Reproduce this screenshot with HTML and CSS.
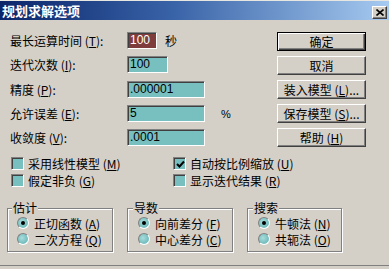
FILE: index.html
```
<!DOCTYPE html>
<html lang="zh-CN">
<head>
<meta charset="utf-8">
<title>规划求解选项</title>
<link rel="stylesheet" href="styles.css">
</head>
<body>
<div class="dialog">
  <div class="titlebar">
    <span class="title">规划求解选项</span>
    <span class="close"><svg width="8" height="7" viewBox="0 0 8 7"><path d="M0.5 0.5 L7.5 6.5 M7.5 0.5 L0.5 6.5" stroke="#000" stroke-width="1.6" fill="none"/></svg></span>
  </div>
  <div class="main">
    <div class="fields">
      <div class="row"><span class="lbl">最长运算时间 (<u>T</u>):</span><span class="edit w30 selected">100</span><span class="unit">秒</span></div>
      <div class="row"><span class="lbl">迭代次数 (<u>I</u>):</span><span class="edit w41">100</span></div>
      <div class="row"><span class="lbl">精度 (<u>P</u>):</span><span class="edit w78">.000001</span></div>
      <div class="row"><span class="lbl">允许误差 (<u>E</u>):</span><span class="edit w78">5</span><span class="pct">%</span></div>
      <div class="row"><span class="lbl">收敛度 (<u>V</u>):</span><span class="edit w78">.0001</span></div>
    </div>
    <div class="buttons">
      <div class="btn default"><span class="face">确定</span></div>
      <div class="btn"><span class="face">取消</span></div>
      <div class="btn"><span class="face">装入模型 (<u>L</u>)...</span></div>
      <div class="btn"><span class="face">保存模型 (<u>S</u>)...</span></div>
      <div class="btn"><span class="face">帮助 (<u>H</u>)</span></div>
    </div>
  </div>
  <div class="checks">
    <div class="check"><span class="box"></span>采用线性模型 (<u>M</u>)</div>
    <div class="check"><span class="box"><svg width="9" height="9" viewBox="0 0 9 9"><path d="M1 4 L3.5 6.5 L8 1.5" stroke="#000" stroke-width="2" fill="none"/></svg></span>自动按比例缩放 (<u>U</u>)</div>
    <div class="check"><span class="box"></span>假定非负 (<u>G</u>)</div>
    <div class="check"><span class="box"></span>显示迭代结果 (<u>R</u>)</div>
  </div>
  <div class="groups">
    <fieldset class="group g1">
      <legend>估计</legend>
      <div class="radio-row"><span class="radio on"></span>正切函数 (<u>A</u>)</div>
      <div class="radio-row"><span class="radio"></span>二次方程 (<u>Q</u>)</div>
    </fieldset>
    <fieldset class="group g2">
      <legend>导数</legend>
      <div class="radio-row"><span class="radio on"></span>向前差分 (<u>F</u>)</div>
      <div class="radio-row"><span class="radio"></span>中心差分 (<u>C</u>)</div>
    </fieldset>
    <fieldset class="group g3">
      <legend>搜索</legend>
      <div class="radio-row"><span class="radio on"></span>牛顿法 (<u>N</u>)</div>
      <div class="radio-row"><span class="radio"></span>共轭法 (<u>O</u>)</div>
    </fieldset>
  </div>
  <div class="bottom-edge"></div>
</div>
</body>
</html>
```
FILE: styles.css
```
* { box-sizing: border-box; }
html, body { margin: 0; padding: 0; }
body {
  width: 389px;
  height: 269px;
  overflow: hidden;
  background: #d4d0c8;
  font-family: "Noto Sans CJK SC", "Liberation Sans", sans-serif;
  font-size: 12px;
  color: #000;
}
u { text-decoration: underline; text-underline-offset: 1px; }
.dialog {
  width: 389px;
  height: 269px;
  display: flex;
  flex-direction: column;
  background: #d4d0c8;
  border-top: 1px solid #e8e6e0;
}
.titlebar {
  height: 19px;
  background: linear-gradient(to right, #0a246a 0%, #3a64a8 45%, #a6caf0 100%);
  display: flex;
  align-items: center;
  justify-content: space-between;
  padding: 0 2px 0 2px;
}
.title {
  color: #fff;
  font-weight: bold;
  font-size: 13px;
  line-height: 19px;
}
.close {
  width: 15px;
  height: 13px;
  margin-top: 3px;
  background: #d4d0c8;
  border: 1px solid;
  border-color: #fff #404040 #404040 #fff;
  box-shadow: inset -1px -1px #808080;
  display: flex;
  align-items: center;
  justify-content: center;
}
.main {
  display: flex;
  justify-content: space-between;
  padding: 12px 23px 0 10px;
}
.fields {
  display: flex;
  flex-direction: column;
  gap: 7px;
}
.row {
  display: flex;
  align-items: center;
  height: 17px;
}
.row:nth-child(3) { margin-top: 1px; }
.lbl {
  width: 117px;
  line-height: 17px;
  white-space: nowrap;
}
.edit {
  height: 17px;
  background: #78c0c0;
  border: 1px solid;
  border-color: #808080 #fff #fff #808080;
  box-shadow: inset 1px 1px #404040;
  font-family: "Liberation Sans", sans-serif;
  font-size: 12px;
  line-height: 15px;
  padding-left: 2px;
  color: #000;
}
.edit.selected { background: #7e3c3c; color: #fff; }
.w30 { width: 30px; }
.w41 { width: 41px; }
.w78 { width: 78px; }
.unit { margin-left: 8px; line-height: 17px; }
.pct { margin-left: 16px; font-family: "Liberation Sans", sans-serif; font-size: 11px; }
.buttons {
  display: flex;
  flex-direction: column;
  gap: 5px;
  width: 89px;
}
.btn {
  height: 19px;
  border: 1px solid;
  border-color: #fff #404040 #404040 #fff;
  box-shadow: inset -1px -1px #808080;
  display: flex;
  align-items: center;
  justify-content: center;
}
.btn.default {
  border: 1px solid #000;
  box-shadow: inset 1px 1px #fff, inset -1px -1px #404040, inset -2px -2px #808080;
}
.face { white-space: nowrap; line-height: 17px; }
.checks {
  display: grid;
  grid-template-columns: 162px auto;
  padding-left: 11px;
  margin-top: 8px;
}
.check {
  display: flex;
  align-items: center;
  height: 17px;
  white-space: nowrap;
}
.box {
  width: 13px;
  height: 13px;
  margin-right: 4px;
  background: #78c0c0;
  border: 1px solid;
  border-color: #808080 #fff #fff #808080;
  box-shadow: inset 1px 1px #404040;
  display: flex;
  align-items: center;
  justify-content: center;
  padding: 1px 0 0 1px;
}
.groups {
  display: flex;
  gap: 14px;
  padding-left: 7px;
  margin-top: 12px;
}
.group {
  margin: 0;
  padding: 0 0 4px 9px;
  border: 1px solid #808080;
  box-shadow: inset 1px 1px #fff, 1px 1px #fff;
  min-width: 0;
}
.g1 { width: 106px; }
.g2 { width: 106px; padding-left: 10px; }
.g3 { width: 95px; padding-left: 10px; }
.group legend {
  padding: 0 1px;
  margin-left: -5px;
  line-height: 14px;
  background: #d4d0c8;
}
.radio-row {
  display: flex;
  align-items: center;
  height: 16px;
  white-space: nowrap;
}
.radio {
  width: 12px;
  height: 12px;
  margin-right: 5px;
  border-radius: 50%;
  background: radial-gradient(circle at 40% 40%, #a8dcdc 0%, #78c0c0 60%);
  border: 1px solid;
  border-color: #808080 #fff #fff #808080;
  position: relative;
}
.radio.on::after {
  content: "";
  position: absolute;
  left: 3px;
  top: 3px;
  width: 4px;
  height: 4px;
  border-radius: 50%;
  background: #000;
}
.bottom-edge {
  margin-top: auto;
  margin-bottom: 3px;
  height: 1px;
  background: #808080;
}
```
